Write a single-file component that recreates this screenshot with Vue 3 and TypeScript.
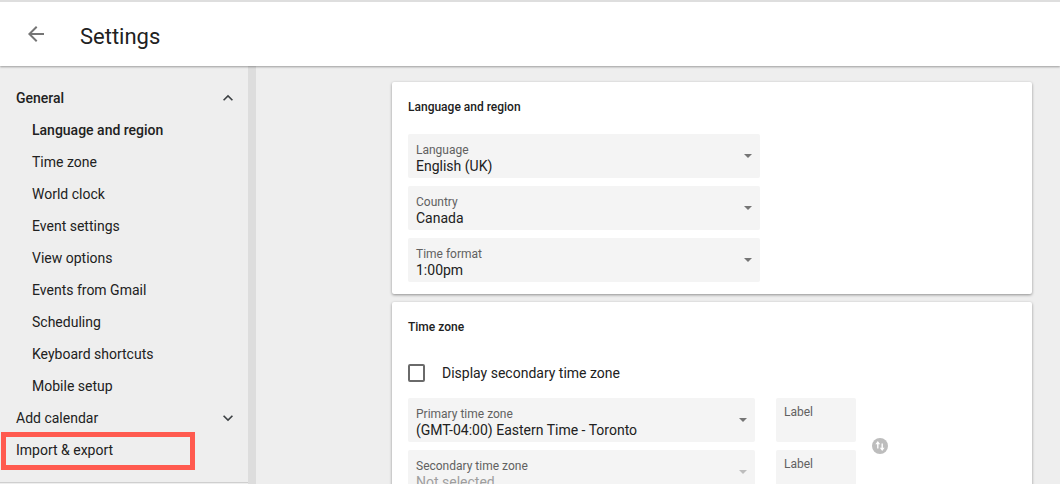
<script setup lang="ts">
const children: string[] = ['Language and region', 'Time zone', 'World clock', 'Event settings', 'View options', 'Events from Gmail', 'Scheduling', 'Keyboard shortcuts', 'Mobile setup']
const regionFields: { label: string; value: string }[] = [
  { label: 'Language', value: 'English (UK)' },
  { label: 'Country', value: 'Canada' },
  { label: 'Time format', value: '1:00pm' },
]
</script>

<template>
  <div class="page">
    <header class="topbar">
      <button class="back" aria-label="Back">
        <svg width="24" height="24" viewBox="0 0 24 24"><path d="M20 11H7.83l5.59-5.59L12 4l-8 8 8 8 1.41-1.41L7.83 13H20v-2z" fill="#757575" /></svg>
      </button>
      <h1>Settings</h1>
    </header>
    <div class="body">
      <nav class="side">
        <div class="nav-list">
          <div class="nav-row strong">
            <span>General</span>
            <svg width="20" height="20" viewBox="0 0 24 24"><path d="M7.41 15.41 12 10.83l4.59 4.58L18 14l-6-6-6 6z" fill="#3c4043" /></svg>
          </div>
          <div v-for="(c, i) in children" :key="c" class="nav-row child" :class="{ strong: i === 0 }">{{ c }}</div>
          <div class="nav-row">
            <span>Add calendar</span>
            <svg width="20" height="20" viewBox="0 0 24 24"><path d="M7.41 8.59 12 13.17l4.59-4.58L18 10l-6 6-6-6z" fill="#3c4043" /></svg>
          </div>
          <div class="nav-row marked">
            <span>Import &amp; export</span>
            <i class="highlight"></i>
          </div>
        </div>
      </nav>
      <div class="gutter"></div>
      <main class="main">
        <section class="card first">
          <h2>Language and region</h2>
          <div class="stack">
            <div v-for="f in regionFields" :key="f.label" class="field wide">
              <div class="field-text">
                <span class="lab">{{ f.label }}</span>
                <span class="val">{{ f.value }}</span>
              </div>
              <i class="caret"></i>
            </div>
          </div>
        </section>
        <section class="card">
          <h2>Time zone</h2>
          <label class="check">
            <i class="box"></i>
            <span>Display secondary time zone</span>
          </label>
          <div class="zones">
            <div class="zone-fields">
              <div class="zone-row">
                <div class="field zone">
                  <div class="field-text">
                    <span class="lab">Primary time zone</span>
                    <span class="val">(GMT-04:00) Eastern Time - Toronto</span>
                  </div>
                  <i class="caret"></i>
                </div>
                <div class="label-box">Label</div>
              </div>
              <div class="zone-row">
                <div class="field zone">
                  <div class="field-text">
                    <span class="lab">Secondary time zone</span>
                    <span class="val muted">Not selected</span>
                  </div>
                  <i class="caret light"></i>
                </div>
                <div class="label-box">Label</div>
              </div>
            </div>
            <svg class="swap" width="16" height="16" viewBox="0 0 16 16">
              <circle cx="8" cy="8" r="8" fill="#bdbdbd" />
              <path d="M5.8 3 3.4 6.2h1.7v4.3h1.4V6.2h1.7zM10.2 13l2.4-3.2h-1.7V5.5H9.500v4.3H7.800z" fill="#fff" />
            </svg>
          </div>
        </section>
      </main>
    </div>
  </div>
</template>

<style>
html, body { margin: 0; overflow: hidden; }
</style>

<style scoped>
.page {
  width: 1060px;
  height: 484px;
  overflow: hidden;
  display: flex;
  flex-direction: column;
  font-family: Roboto, "Liberation Sans", sans-serif;
  background: #eeeeee;
  color: #212121;
}
.topbar {
  height: 66px;
  flex: none;
  box-sizing: border-box;
  border-top: 2px solid #dedede;
  background: #fff;
  display: flex;
  align-items: center;
  padding: 0 0 0 24px;
  box-shadow: 0 1px 2px rgba(0, 0, 0, 0.35);
  position: relative;
  z-index: 2;
}
.back {
  width: 24px;
  height: 24px;
  padding: 0;
  margin: 0 32px 0 0;
  border: 0;
  background: none;
}
.back svg { display: block; }
h1 {
  margin: 4px 0 0;
  font-size: 22px;
  font-weight: 400;
  color: #212121;
}
.body {
  flex: 1;
  min-height: 0;
  display: flex;
}
.side {
  width: 248px;
  height: 417px;
  flex: none;
  box-sizing: border-box;
  padding-top: 16px;
  background: #eeeeee;
  border-bottom: 1px solid #cfcfcf;
}
.nav-row {
  position: relative;
  height: 32px;
  display: flex;
  align-items: center;
  justify-content: space-between;
  padding: 0 10px 0 16px;
  font-size: 14px;
  color: #212121;
}
.nav-row.child { padding-left: 32px; }
.nav-row.strong { font-weight: 500; }
.highlight {
  position: absolute;
  left: 1px;
  top: -2px;
  width: 194px;
  height: 38px;
  box-sizing: border-box;
  border: 5px solid #ff5a4f;
}
.gutter {
  width: 8px;
  flex: none;
  background: #dddddd;
}
.main {
  flex: 1;
  min-width: 0;
  padding: 16px 28px 0 136px;
}
.card {
  background: #fff;
  border-radius: 2px;
  box-shadow: 0 1px 3px rgba(0, 0, 0, 0.4);
  padding: 16px;
  margin-bottom: 8px;
}
.card.first { height: 212px; box-sizing: border-box; }
h2 {
  margin: 0;
  height: 16px;
  padding-top: 1px;
  line-height: 16px;
  font-size: 12px;
  font-weight: 500;
  color: #212121;
  box-sizing: content-box;
}
.stack {
  margin-top: 19px;
  display: flex;
  flex-direction: column;
  gap: 8px;
}
.field {
  height: 44px;
  box-sizing: border-box;
  background: #f4f4f4;
  border-radius: 2px;
  padding: 8px 8px 0;
  position: relative;
  display: flex;
  justify-content: space-between;
}
.field.wide { width: 352px; }
.field.zone { width: 347px; }
.field-text {
  display: flex;
  flex-direction: column;
}
.lab {
  font-size: 12px;
  line-height: 16px;
  color: #616161;
}
.val {
  font-size: 14px;
  line-height: 16px;
  color: #212121;
}
.val.muted { color: #9e9e9e; }
.caret {
  width: 0;
  height: 0;
  margin-top: 12px;
  border-left: 4px solid transparent;
  border-right: 4px solid transparent;
  border-top: 4px solid #757575;
}
.caret.light { border-top-color: #bdbdbd; }
.check {
  margin-top: 29px;
  height: 18px;
  display: flex;
  align-items: center;
  gap: 17px;
  font-size: 14px;
  color: #212121;
}
.box {
  width: 17px;
  height: 18px;
  box-sizing: border-box;
  border: 2px solid #6a6a6a;
  border-radius: 2px;
}
.zones {
  margin-top: 16px;
  display: flex;
  align-items: center;
}
.zone-fields {
  display: flex;
  flex-direction: column;
  gap: 8px;
}
.zone-row {
  display: flex;
  gap: 21px;
}
.label-box {
  width: 80px;
  height: 44px;
  box-sizing: border-box;
  padding: 6px 8px 0;
  background: #f4f4f4;
  border-radius: 2px;
  font-size: 12px;
  line-height: 16px;
  color: #616161;
}
.swap {
  flex: none;
  margin-left: 16px;
}
</style>
